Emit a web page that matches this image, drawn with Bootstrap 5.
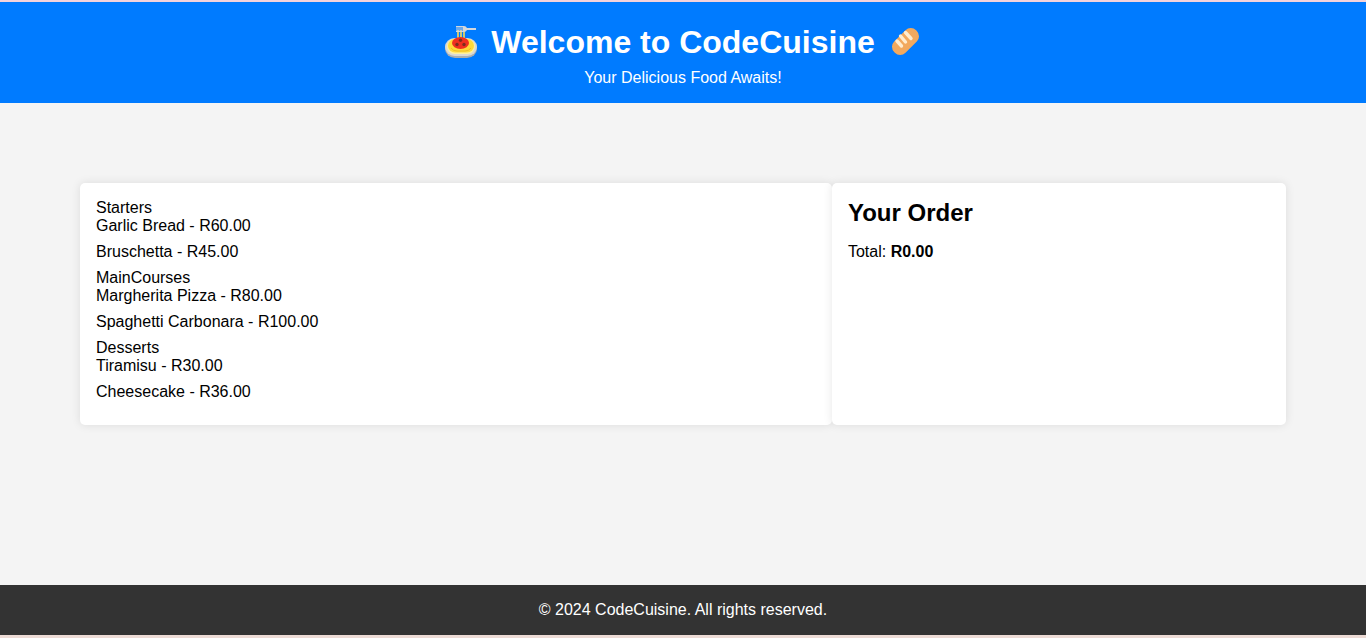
<!DOCTYPE html>
<html lang="en">
<head>
<meta charset="utf-8">
<meta name="viewport" content="width=device-width, initial-scale=1">
<title>CodeCuisine</title>
<link href="https://cdn.jsdelivr.net/npm/bootstrap@5.3.0/dist/css/bootstrap.min.css" rel="stylesheet">
<style>
body { font-family: "Liberation Sans", Arial, sans-serif; font-size: 16px; line-height: 18px; color: #000; background: #f4f4f4; border-top: 2px solid #f3d3dc; border-bottom: 3px solid #eddbd5; }
.site-header { background: #007bff; }
.site-title { font-size: 32px; line-height: 48px; font-weight: 700; gap: 12px; margin-bottom: 3px; }
.title-icon { width: 36px; height: 36px; }
.shop { padding: 80px; }
.panel { background: #fff; border-radius: 5px; box-shadow: 0 0 10px rgba(0, 0, 0, .1); }
.menu-panel { flex: 0 0 62.35%; }
.order-title { font-size: 24px; line-height: 28px; font-weight: 700; margin-bottom: 16px; }
.site-footer { background: #333; }
</style>
</head>
<body class="d-flex flex-column min-vh-100">
<header class="site-header text-white text-center p-3">
  <h1 class="site-title d-flex justify-content-center align-items-center">
    <svg class="title-icon" viewBox="0 0 36 36" aria-hidden="true">
      <rect x="2" y="15" width="32" height="19" rx="10" fill="#a9adb0"/>
      <rect x="2" y="14" width="32" height="18" rx="9.500" fill="#d9d9d6"/>
      <rect x="4" y="15" width="28" height="15" rx="7.500" fill="#fff1a0"/>
      <rect x="5" y="15" width="26" height="13.500" rx="7" fill="#ffda3a"/>
      <path d="M8 24q2 3 6 3h8q4 0 6-3" fill="none" stroke="#f0bd25" stroke-width="1"/>
      <path d="M15 6v10M18 6v10M21 6v10" stroke="#e0d06a" stroke-width="1.800"/>
      <ellipse cx="17.500" cy="19" rx="8.500" ry="6" fill="#ef2f20"/>
      <g fill="#7d2d1d"><circle cx="17.500" cy="16.300" r="1.700"/><circle cx="14" cy="20.500" r="1.700"/><circle cx="21" cy="20.500" r="1.700"/></g>
      <path d="M13 2h8q2 0 3 2h9v2h-9q-1 2-3 2h-8V6.500h7V5.500h-7V4.500h7V3.500h-7z" fill="#d3d7dc"/>
    </svg>
    <span>Welcome to CodeCuisine</span>
    <svg class="title-icon" viewBox="0 0 36 36" aria-hidden="true">
      <rect x="3" y="9.500" width="31" height="16" rx="7.500" fill="#f2a95e" transform="rotate(-45 18.500 17.500)"/>
      <path d="M10 17l4.500 5M13.500 12l5 6M18.500 8.500l5.500 6" fill="none" stroke="#ffedd0" stroke-width="3.400" stroke-linecap="round"/>
    </svg>
  </h1>
  <p class="mb-0">Your Delicious Food Awaits!</p>
</header>
<main class="shop d-flex align-items-stretch">
  <section class="panel menu-panel p-3" aria-label="Menu">
    <div>Starters</div>
    <ul class="list-unstyled mb-0">
      <li class="mb-2">Garlic Bread - R60.00</li>
      <li class="mb-2">Bruschetta - R45.00</li>
    </ul>
    <div>MainCourses</div>
    <ul class="list-unstyled mb-0">
      <li class="mb-2">Margherita Pizza - R80.00</li>
      <li class="mb-2">Spaghetti Carbonara - R100.00</li>
    </ul>
    <div>Desserts</div>
    <ul class="list-unstyled mb-0">
      <li class="mb-2">Tiramisu - R30.00</li>
      <li class="mb-2">Cheesecake - R36.00</li>
    </ul>
  </section>
  <section class="panel flex-grow-1 p-3">
    <h2 class="order-title">Your Order</h2>
    <p class="mb-0">Total: <strong>R0.00</strong></p>
  </section>
</main>
<footer class="site-footer text-white text-center p-3 mt-auto">
  <p class="mb-0">© 2024 CodeCuisine. All rights reserved.</p>
</footer>
<script src="https://cdn.jsdelivr.net/npm/bootstrap@5.3.0/dist/js/bootstrap.bundle.min.js"></script>
</body>
</html>
